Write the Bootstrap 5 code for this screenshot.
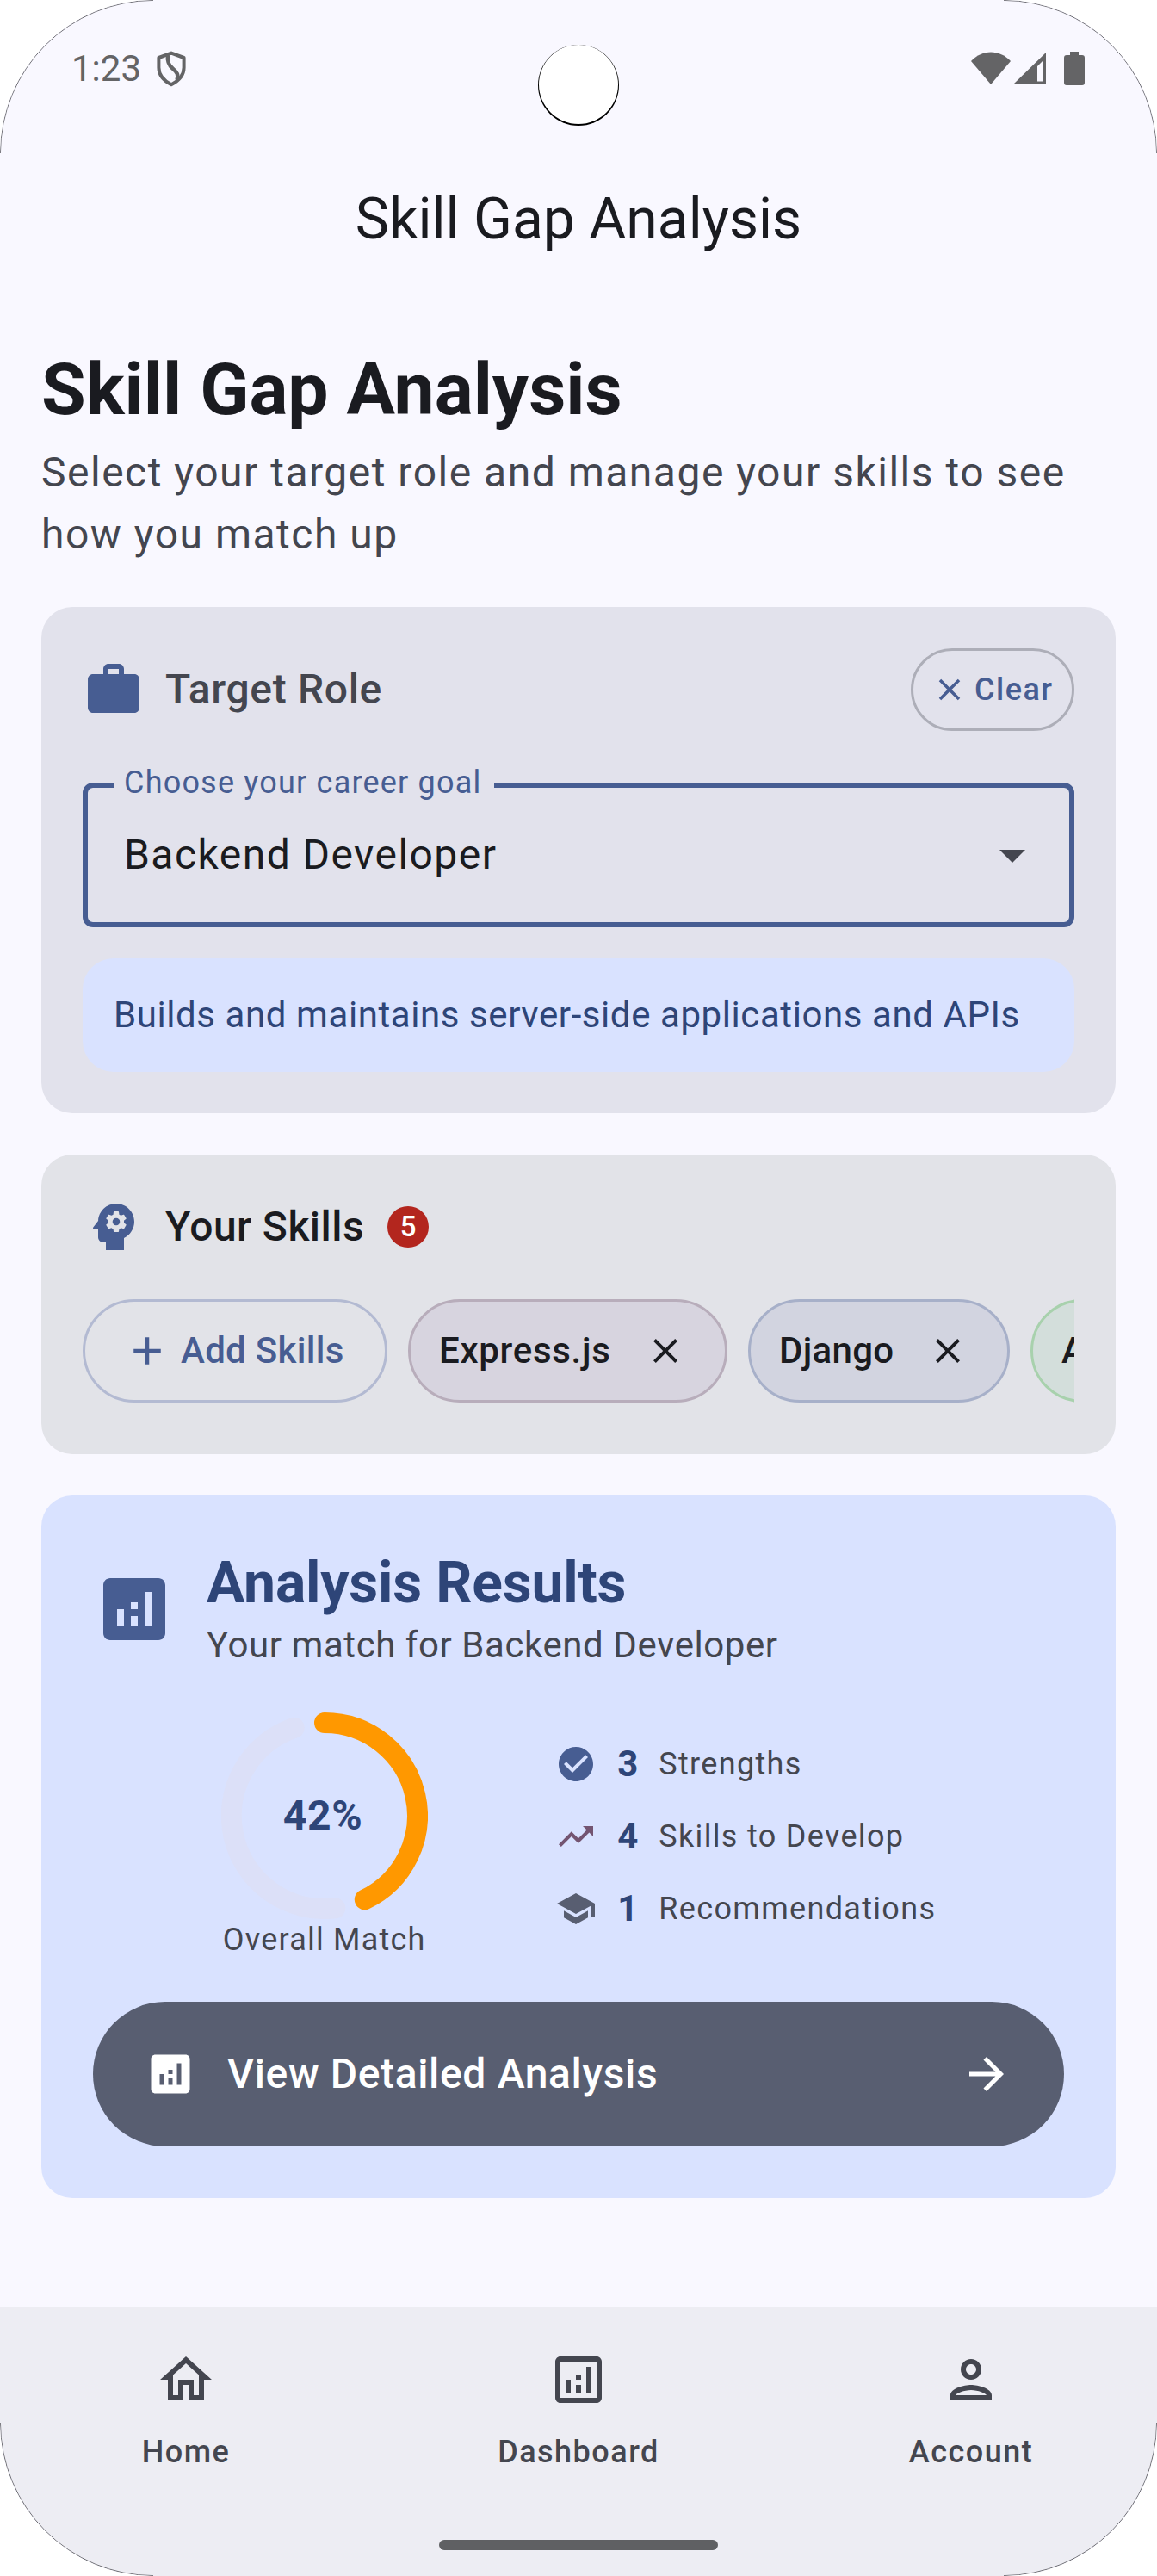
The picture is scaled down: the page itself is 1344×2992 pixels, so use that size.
<!DOCTYPE html>
<html lang="en">
<head>
<meta charset="utf-8">
<meta name="viewport" content="width=device-width, initial-scale=1">
<title>Skill Gap Analysis</title>
<link href="https://cdn.jsdelivr.net/npm/bootstrap@5.3.0/dist/css/bootstrap.min.css" rel="stylesheet">
<style>
  :root { --ink:#1a1b20; --muted:#44464f; --primary:#475d92; --deep:#2e4578; --soft:#d9e2ff; }
  body { margin:0; background:#fff; font-family:Roboto,"Liberation Sans",sans-serif; color:var(--ink); }
  svg { display:block; flex:none; fill:currentColor; }
  .screen { width:1344px; height:2992px; background:#f9f8ff; border-radius:178px; }
  .rim { left:0; top:0; fill:none; pointer-events:none; }
  .status { height:159px; padding:0 84px 0 83px; color:#646466; font-size:42px; line-height:60px; }
  .camera { width:94px; height:94px; left:625px; top:52px; background:#fff; box-shadow:inset 0 -1px 0 1px #000; }
  .topbar { height:192px; font-size:66px; line-height:84px; }
  .content { padding:48px 48px 0; }
  .headline { font-size:84px; line-height:108px; font-weight:700; margin:0 0 6px; }
  .lede { font-size:48px; line-height:72px; letter-spacing:1.5px; color:var(--muted); margin:0 0 48px; }
  .panel { border:0; border-radius:36px; margin-bottom:48px; }
  .panel-role { background:#e2e2ec; padding:48px; height:588px; }
  .panel-skills { background:#e2e3e8; padding:48px; height:348px; }
  .panel-result { background:var(--soft); padding:60px; height:816px; }
  .i42{width:42px;height:42px}.i48{width:48px;height:48px}.i54{width:54px;height:54px}.i60{width:60px;height:60px}.i72{width:72px;height:72px}.i96{width:96px;height:96px}
  .c-primary { color:var(--primary); }
  .c-deep { color:var(--deep); }
  .c-muted { color:var(--muted); }
  .title-m { font-size:48px; line-height:72px; font-weight:500; letter-spacing:.45px; margin:0; }
  .title-wide { letter-spacing:.65px; }
  .btn-clear { width:190px; height:96px; padding:0 0 0 21px; gap:8px; border:3px solid #adaeb8; color:var(--primary); font-size:36px; line-height:48px; font-weight:500; letter-spacing:1.5px; }
  .picker { height:168px; margin-top:60px; border:6px solid var(--primary); border-radius:12px; padding:0 30px 0 42px; font-size:48px; letter-spacing:1.45px; }
  .picker-label { left:30px; top:-30px; width:442px; padding-left:12px; background:#e2e2ec; color:var(--primary); font-size:36px; line-height:48px; letter-spacing:1.2px; white-space:nowrap; }
  .note { margin-top:36px; height:132px; padding:36px; border-radius:36px; background:var(--soft); color:var(--deep); font-size:42px; line-height:60px; letter-spacing:.58px; white-space:nowrap; }
  .count { width:48px; height:48px; margin-left:27px; background:#b3261e; color:#fff; font-size:33px; line-height:48px; font-weight:500; }
  .chips { margin-top:48px; gap:24px; }
  .pill { height:120px; flex:none; border:3px solid; border-radius:60px; font-size:42px; line-height:60px; font-weight:500; letter-spacing:.3px; }
  .pill-add { width:354px; padding-left:45px; gap:12px; border-color:#b3bad2; color:var(--primary); }
  .pill-skill { padding:0 45px 0 33px; }
  .pill-rose { width:371px; background:#d7d4df; border-color:#b8adbb; letter-spacing:.7px; }
  .pill-blue { width:304px; background:#d2d4e0; border-color:#a7b0c9; }
  .pill-green { width:240px; background:#d3dedb; border-color:#a8d1ad; }
  .result-title { font-size:66px; line-height:84px; font-weight:700; letter-spacing:-.2px; margin:0; }
  .result-sub { font-size:42px; line-height:60px; letter-spacing:.57px; }
  .summary { margin-top:48px; height:288px; }
  .ring { width:240px; height:240px; }
  .ring-value { font-size:48px; line-height:72px; font-weight:700; letter-spacing:.7px; margin-right:3px; }
  .caption { font-size:36px; line-height:48px; letter-spacing:1.2px; color:var(--muted); white-space:nowrap; }
  .stats { gap:24px; width:442px; }
  .stats .caption { letter-spacing:1.32px; }
  .stat { gap:24px; height:60px; }
  .stat b { width:24px; font-size:42px; line-height:60px; font-weight:700; color:var(--deep); }
  .btn-detail { margin-top:48px; height:168px; padding:0 60px; border:0; border-radius:84px; background:#585e71; color:#fff; }
  .btn-detail span { margin-left:36px; }
  .tabs { height:312px; background:#ededf3; border-radius:0 0 178px 178px; padding-top:48px; gap:24px; color:var(--muted); }
  .tab { width:432px; gap:24px; font-size:36px; line-height:48px; font-weight:500; letter-spacing:1.5px; }
  .handle { width:324px; height:12px; left:510px; top:2950px; border-radius:6px; background:#5f6063; }
</style>
</head>
<body>
<svg width="0" height="0" class="position-absolute">
  <symbol id="close" viewBox="0 0 24 24"><path d="M19 6.41L17.59 5 12 10.59 6.41 5 5 6.41 10.59 12 5 17.59 6.41 19 12 13.41 17.59 19 19 17.59 13.41 12z"/></symbol>
  <symbol id="analytics" viewBox="0 0 24 24"><path d="M19 3H5c-1.1 0-2 .9-2 2v14c0 1.1.9 2 2 2h14c1.1 0 2-.9 2-2V5c0-1.1-.9-2-2-2zM9 17H7v-5h2v5zm4 0h-2v-3h2v3zm0-5h-2v-2h2v2zm4 5h-2V7h2v10z"/></symbol>
</svg>
<div class="screen position-relative d-flex flex-column overflow-hidden">
  <header class="status d-flex align-items-center">
    <span>1:23</span>
    <svg width="36" height="42" viewBox="0 0 36 42" style="margin-left:17px"><path d="M18 2.6L32.6 8v11.5C32.6 28 27 34.600 18 39.200 9 34.600 3.400 28 3.400 19.500V8z" fill="none" stroke="currentColor" stroke-width="4" stroke-linejoin="round"/><path d="M14 5c-1 7 .5 11 5.500 15.500C25 25 26.500 28 24.500 34" fill="none" stroke="currentColor" stroke-width="4.500"/></svg>
    <div class="ms-auto d-flex">
      <svg width="46" height="40" viewBox="0 0 46 40"><path d="M0 11C13-3 33-3 46 11L23 38z"/></svg>
      <svg width="38" height="40" viewBox="0 0 38 40" style="margin-left:3px"><path fill-rule="evenodd" d="M38 1v37H0zM34 11l-6 6v17.500h6z"/></svg>
      <svg width="24" height="40" viewBox="0 0 24 40" style="margin-left:21px"><path d="M7 0h10v4h4q3 0 3 3v29q0 3-3 3H3q-3 0-3-3V7q0-3 3-3h4z"/></svg>
    </div>
  </header>
  <div class="camera position-absolute rounded-circle"></div>
  <div class="topbar d-flex align-items-center justify-content-center">Skill Gap Analysis</div>

  <main class="content flex-grow-1">
    <h1 class="headline">Skill Gap Analysis</h1>
    <p class="lede">Select your target role and manage your skills to see how you match up</p>

    <section class="card panel panel-role">
      <div class="d-flex align-items-center">
        <svg class="i72 c-primary" viewBox="0 0 24 24"><path d="M20 6h-4V4c0-1.110-.89-2-2-2h-4c-1.110 0-2 .89-2 2v2H4c-1.110 0-1.990.89-1.990 2L2 19c0 1.110.89 2 2 2h16c1.110 0 2-.89 2-2V8c0-1.110-.89-2-2-2zm-6 0h-4V4h4v2z"/></svg>
        <h2 class="title-m title-wide c-muted ms-4">Target Role</h2>
        <button class="btn btn-clear rounded-pill ms-auto d-flex align-items-center"><svg class="i42"><use href="#close"/></svg>Clear</button>
      </div>
      <div class="picker position-relative d-flex align-items-center justify-content-between">
        <label class="picker-label position-absolute">Choose your career goal</label>
        <span>Backend Developer</span>
        <svg class="i72 c-muted" viewBox="0 0 24 24"><path d="M7 10l5 5 5-5z"/></svg>
      </div>
      <div class="note">Builds and maintains server-side applications and APIs</div>
    </section>

    <section class="card panel panel-skills">
      <div class="d-flex align-items-center">
        <svg class="i72 c-primary" viewBox="0 0 24 24"><path d="M13 8.570c-.79 0-1.430.64-1.430 1.430s.64 1.430 1.430 1.430 1.430-.64 1.430-1.430-.64-1.430-1.430-1.430z"/><path d="M13 3C9.250 3 6.200 5.940 6.020 9.640L4.100 12.200C3.850 12.530 4.090 13 4.500 13H6v3c0 1.100.9 2 2 2h1v3h7v-4.680c2.360-1.120 4-3.530 4-6.320C20 6.130 16.870 3 13 3zM16 10c0 .13-.01.26-.02.39l.83.66c.08.06.1.16.05.25l-.8 1.390c-.05.09-.16.12-.24.09l-.99-.4c-.21.16-.43.29-.67.39L14 13.830c-.01.1-.1.17-.2.17h-1.600c-.1 0-.18-.07-.2-.17l-.15-1.060c-.25-.1-.47-.23-.68-.39l-.99.4c-.09.03-.2 0-.25-.09l-.8-1.390c-.05-.08-.03-.19.05-.25l.84-.66c-.01-.13-.02-.26-.02-.39s.02-.27.04-.39l-.85-.66c-.08-.06-.1-.16-.05-.26l.8-1.380c.05-.09.15-.12.24-.09l1 .4c.2-.15.43-.29.67-.39L12 6.170c.02-.1.1-.17.2-.17h1.600c.1 0 .18.07.2.17l.15 1.060c.24.1.46.23.67.39l1-.4c.09-.03.2 0 .24.09l.8 1.380c.05.09.03.2-.05.26l-.85.66c.03.12.04.25.04.39z"/></svg>
        <h2 class="title-m ms-4">Your Skills</h2>
        <span class="count rounded-circle text-center">5</span>
      </div>
      <div class="chips d-flex overflow-hidden">
        <button class="btn pill pill-add d-flex align-items-center"><svg class="i54" viewBox="0 0 24 24"><path d="M19 13h-6v6h-2v-6H5v-2h6V5h2v6h6v2z"/></svg>Add Skills</button>
        <div class="pill pill-skill pill-rose d-flex align-items-center justify-content-between">Express.js<svg class="i48"><use href="#close"/></svg></div>
        <div class="pill pill-skill pill-blue d-flex align-items-center justify-content-between">Django<svg class="i48"><use href="#close"/></svg></div>
        <div class="pill pill-skill pill-green d-flex align-items-center">A</div>
      </div>
    </section>

    <section class="card panel panel-result mb-0">
      <div class="d-flex align-items-center">
        <svg class="i96 c-primary"><use href="#analytics"/></svg>
        <div style="margin-left:36px">
          <h2 class="result-title c-deep">Analysis Results</h2>
          <div class="result-sub c-muted">Your match for Backend Developer</div>
        </div>
      </div>
      <div class="summary d-flex align-items-center justify-content-evenly">
        <div class="d-flex flex-column align-items-center">
          <div class="ring position-relative d-flex align-items-center justify-content-center">
            <svg class="position-absolute top-0 start-0" width="240" height="240" viewBox="0 0 240 240" fill="none" stroke-width="24" stroke-linecap="round" style="fill:none">
              <path d="M132.400 227.300A108 108 0 0 1 84.700 17.900" stroke="#dce0f8"/>
              <path d="M120 12A108 108 0 0 1 166.800 217.300" stroke="#ff9800"/>
            </svg>
            <span class="ring-value c-deep position-relative">42%</span>
          </div>
          <div class="caption">Overall Match</div>
        </div>
        <div class="stats d-flex flex-column">
          <div class="stat d-flex align-items-center"><svg class="i48 c-primary" viewBox="0 0 24 24"><path d="M12 2C6.480 2 2 6.480 2 12s4.480 10 10 10 10-4.480 10-10S17.520 2 12 2zm-2 15l-5-5 1.410-1.410L10 14.170l7.590-7.590L19 8l-9 9z"/></svg><b>3</b><span class="caption">Strengths</span></div>
          <div class="stat d-flex align-items-center"><svg class="i48" style="color:#735471" viewBox="0 0 24 24"><path d="M16 6l2.290 2.290-4.880 4.880-4-4L2 16.590 3.410 18l6-6 4 4 6.300-6.290L22 12V6z"/></svg><b>4</b><span class="caption">Skills to Develop</span></div>
          <div class="stat d-flex align-items-center"><svg class="i48" style="color:#585e71" viewBox="0 0 24 24"><path d="M5 13.180v4L12 21l7-3.820v-4L12 17l-7-3.820zM12 3L1 9l11 6 9-4.910V17h2V9L12 3z"/></svg><b>1</b><span class="caption">Recommendations</span></div>
        </div>
      </div>
      <button class="btn btn-detail d-flex align-items-center">
        <svg class="i60"><use href="#analytics"/></svg>
        <span class="title-m title-wide">View Detailed Analysis</span>
        <svg class="i60 ms-auto" viewBox="0 0 24 24"><path d="M12 4l-1.410 1.410L16.170 11H4v2h12.170l-5.580 5.590L12 20l8-8z"/></svg>
      </button>
    </section>
  </main>

  <nav class="tabs d-flex flex-shrink-0">
    <div class="tab d-flex flex-column align-items-center"><svg class="i72" viewBox="0 0 24 24"><path d="M12 5.690l5 4.500V18h-2v-6H9v6H7v-7.810l5-4.500M12 3L2 12h3v8h6v-6h2v6h6v-8h3L12 3z"/></svg>Home</div>
    <div class="tab d-flex flex-column align-items-center"><svg class="i72" viewBox="0 0 24 24"><path d="M19 3H5c-1.100 0-2 .9-2 2v14c0 1.100.9 2 2 2h14c1.100 0 2-.9 2-2V5c0-1.100-.9-2-2-2zm0 16H5V5h14v14zM7 12h2v5H7zM15 7h2v10h-2zM11 14h2v3h-2zM11 10h2v2h-2z"/></svg>Dashboard</div>
    <div class="tab d-flex flex-column align-items-center"><svg class="i72" viewBox="0 0 24 24"><path d="M12 6c1.100 0 2 .9 2 2s-.9 2-2 2-2-.9-2-2 .9-2 2-2m0 10c2.700 0 5.800 1.290 6 2H6c.23-.72 3.310-2 6-2m0-12C9.790 4 8 5.790 8 8s1.790 4 4 4 4-1.790 4-4-1.790-4-4-4zm0 10c-2.670 0-8 1.340-8 4v2h16v-2c0-2.660-5.330-4-8-4z"/></svg>Account</div>
  </nav>
  <div class="handle position-absolute"></div>
  <svg class="rim position-absolute" width="1344" height="2992" viewBox="0 0 1344 2992" stroke="#33343a" stroke-width=".7">
    <path d="M.4 178A178 178 0 0 1 178 .4M1166 .4A178 178 0 0 1 1343.600 178M1343.600 2814A178 178 0 0 1 1166 2991.600M178 2991.600A178 178 0 0 1 .4 2814"/>
  </svg>
</div>
<script src="https://cdn.jsdelivr.net/npm/bootstrap@5.3.0/dist/js/bootstrap.bundle.min.js"></script>
</body>
</html>
